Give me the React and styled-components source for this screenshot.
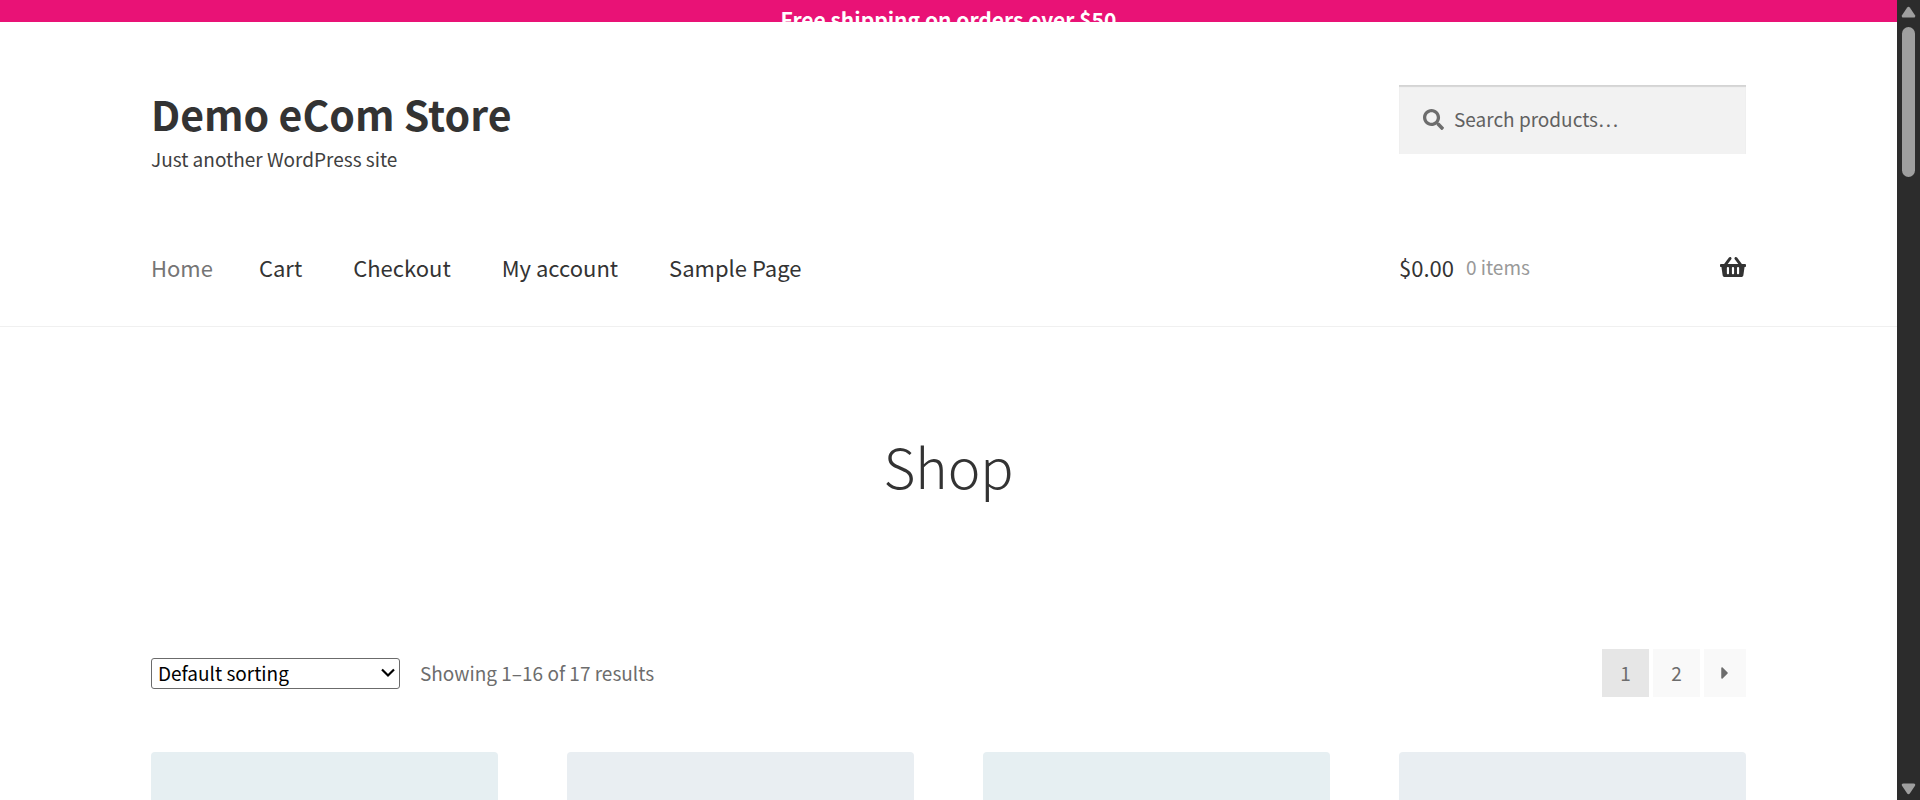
import React from "react";
import styled, { createGlobalStyle } from "styled-components";
import { FaSearch, FaShoppingBasket, FaCaretRight } from "react-icons/fa";

const GlobalStyle = createGlobalStyle`
  * { box-sizing: border-box; }
  html, body { margin: 0; height: 100%; }
  body {
    background: #fff;
    color: #6d6d6d;
    font-family: "Noto Sans CJK SC", "Open Sans", sans-serif;
    font-size: 19px;
    line-height: 32px;
  }
  a { text-decoration: none; color: inherit; }
`;

const Viewport = styled.div`
  display: flex;
  height: 100vh;
  overflow: hidden;
`;

const Page = styled.div`
  flex: 1;
  min-width: 0;
  overflow: hidden;
`;

const Banner = styled.div`
  height: 22px;
  padding-top: 3px;
  overflow: hidden;
  background: #e91276;
  color: #fff;
  font-size: 21px;
  font-weight: 700;
  text-align: center;
`;

const Columns = styled.div`
  display: grid;
  grid-template-columns: repeat(4, 1fr);
  column-gap: 69px;
  padding: 0 151px;
`;

const Header = styled.header`
  border-bottom: 1px solid #f0f0f0;
`;

const HeaderTop = styled(Columns)`
  align-items: start;
  padding-top: 63px;
`;

const Branding = styled.div`
  grid-column: span 3;
`;

const SiteTitle = styled.a`
  display: block;
  margin-bottom: 2px;
  color: #333;
  font-size: 41px;
  font-weight: 700;
  line-height: 56px;
`;

const Tagline = styled.p`
  margin: 0;
  color: #404040;
`;

const SearchForm = styled.form`
  display: flex;
  align-items: center;
  gap: 10px;
  height: 69px;
  padding: 0 24px;
  background: #f2f2f2;
  box-shadow: inset 0 2px 1px rgba(0, 0, 0, 0.12);
  color: #6d6d6d;
`;

const SearchInput = styled.input`
  flex: 1;
  min-width: 0;
  height: 32px;
  margin-bottom: 2px;
  padding: 0;
  border: 0;
  outline: 0;
  background: transparent;
  font: inherit;
  color: #43454b;
  &::placeholder { color: #616161; opacity: 1; }
`;

const HeaderNav = styled(Columns)`
  padding-top: 76px;
  padding-bottom: 43px;
`;

const Menu = styled.nav`
  grid-column: span 3;
  display: flex;
  font-size: 22px;
`;

const MenuLink = styled.a`
  margin-right: ${(p) => (p.$current ? 46 : 51)}px;
  color: ${(p) => (p.$current ? "#757575" : "#333")};
`;

const CartLink = styled.a`
  display: flex;
  align-items: center;
  gap: 12px;
  color: #333;
  font-size: 22px;
  svg { margin-left: auto; }
`;

const CartCount = styled.span`
  color: #999;
  font-size: 19px;
`;

const PageTitle = styled.h1`
  margin: 0;
  padding: 92px 0 138px;
  color: #333;
  font-size: 55px;
  font-weight: 300;
  line-height: 92px;
  text-align: center;
`;

const Toolbar = styled.div`
  display: flex;
  align-items: center;
  padding: 0 151px;
  margin-bottom: 55px;
`;

const SortingField = styled.div`
  display: grid;
  align-items: center;
  margin-right: 20px;
  > * { grid-area: 1 / 1; }
  svg {
    justify-self: end;
    margin-right: 5px;
    pointer-events: none;
  }
`;

const Sorting = styled.select`
  appearance: none;
  width: 249px;
  height: 31px;
  padding: 0 24px 0 6px;
  border: 1px solid #6b6b6b;
  border-radius: 3px;
  background: #fff;
  color: #000;
  font: inherit;
  line-height: 28px;
`;

const Pagination = styled.nav`
  display: flex;
  gap: 4px;
  margin-left: auto;
`;

const PageLink = styled.a`
  display: flex;
  align-items: center;
  justify-content: center;
  width: ${(p) => (p.$narrow ? 42 : 47)}px;
  height: 48px;
  background: ${(p) => (p.$current ? "#e6e6e6" : "#f9f9f9")};
`;

const ProductImage = styled.a`
  display: block;
  aspect-ratio: 1;
  border-radius: 4px;
  background: ${(p) => p.$tint};
`;

const ScrollTrack = styled.div`
  display: flex;
  flex-direction: column;
  align-items: center;
  width: 23px;
  padding: 6px 0 5px;
  background: #2c2c2c;
`;

const ScrollThumb = styled.div`
  width: 13px;
  height: 150px;
  margin: 9px 0 auto;
  border-radius: 7px;
  background: #9f9f9f;
`;

const Arrow = ({ down }) => (
  <svg width="15" height="12" viewBox="0 0 15 12" aria-hidden="true">
    <path
      d="M6.2 1.5 Q7.5 0 8.8 1.5 L14 9.2 Q14.8 11.5 12.6 11.5 H2.4 Q.2 11.5 1 9.2Z"
      fill="#9f9f9f"
      transform={down ? "rotate(180 7.5 6)" : undefined}
    />
  </svg>
);

const menu = ["Home", "Cart", "Checkout", "My account", "Sample Page"];
const products = [
  { name: "Product 1", tint: "#e6eff2" },
  { name: "Product 2", tint: "#e9eef2" },
  { name: "Product 3", tint: "#e6eff2" },
  { name: "Product 4", tint: "#e9eef2" },
];

export default function App() {
  return (
    <Viewport>
      <GlobalStyle />
      <Page>
        <Banner>Free shipping on orders over $50</Banner>
        <Header>
          <HeaderTop>
            <Branding>
              <SiteTitle href="#">Demo eCom Store</SiteTitle>
              <Tagline>Just another WordPress site</Tagline>
            </Branding>
            <SearchForm role="search">
              <FaSearch size={21} aria-hidden="true" />
              <SearchInput type="search" aria-label="Search products" placeholder="Search products…" />
            </SearchForm>
          </HeaderTop>
          <HeaderNav>
            <Menu aria-label="Primary">
              {menu.map((item, i) => (
                <MenuLink key={item} href="#" $current={i === 0}>{item}</MenuLink>
              ))}
            </Menu>
            <CartLink href="#">
              <span>$0.00</span>
              <CartCount>0 items</CartCount>
              <FaShoppingBasket size={26} aria-hidden="true" />
            </CartLink>
          </HeaderNav>
        </Header>
        <main>
          <PageTitle>Shop</PageTitle>
          <Toolbar>
            <SortingField>
              <Sorting aria-label="Shop order" defaultValue="default">
                <option value="default">Default sorting</option>
                <option value="popularity">Sort by popularity</option>
                <option value="price">Sort by price</option>
              </Sorting>
              <svg width="14" height="10" viewBox="0 0 14 10" aria-hidden="true">
                <path d="M1 1.5 L7 7.5 L13 1.5" fill="none" stroke="#000" strokeWidth="2.2" />
              </svg>
            </SortingField>
            <span>Showing 1–16 of 17 results</span>
            <Pagination aria-label="Product pages">
              <PageLink href="#" $current aria-current="page">1</PageLink>
              <PageLink href="#">2</PageLink>
              <PageLink href="#" $narrow aria-label="Next page">
                <FaCaretRight size={20} />
              </PageLink>
            </Pagination>
          </Toolbar>
          <Columns>
            {products.map((p) => (
              <ProductImage key={p.name} href="#" aria-label={p.name} $tint={p.tint} />
            ))}
          </Columns>
        </main>
      </Page>
      <ScrollTrack aria-hidden="true">
        <Arrow />
        <ScrollThumb />
        <Arrow down />
      </ScrollTrack>
    </Viewport>
  );
}
